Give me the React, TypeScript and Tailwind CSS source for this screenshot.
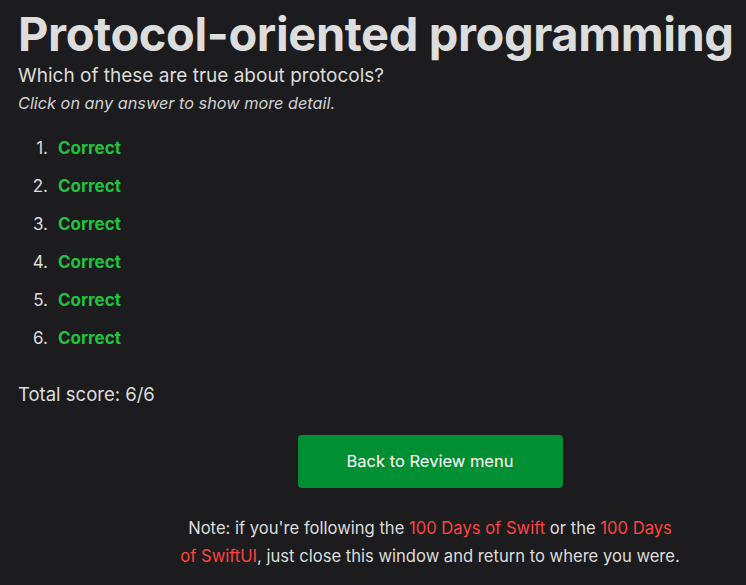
import { FC } from "react";

const answers = [1, 2, 3, 4, 5, 6];

const AnswerRow: FC<{ n: number }> = ({ n }) => {
  return (
    <li className="flex h-[38px] items-center">
      <span className="w-[40px] pr-[10px] text-right font-normal text-[#dcdcdc]">{n}.</span>
      <span className="font-bold text-[#1ec43c]">Correct</span>
    </li>
  );
};

export default function App() {
  return (
    <div
      className="h-[585px] w-[746px] overflow-hidden bg-[#1c1c1e] text-[#dcdcdc]"
      style={{ fontFamily: "Inter, 'Noto Sans', sans-serif" }}
    >
      <div className="w-[842px] pl-[18px] pt-[7px]">
        <h1 className="text-[47px] font-bold leading-[54px] tracking-[-0.4px] text-[#dddddd]">
          Protocol-oriented programming
        </h1>
        <p className="mt-[2px] text-[19px] leading-[26px]">Which of these are true about protocols?</p>
        <p className="mt-[1px] text-[16.3px] italic leading-[26px] text-[#d0d0d0]">
          Click on any answer to show more detail.
        </p>

        <ol className="mt-[14px] text-[17px]">
          {answers.map((n) => (
            <AnswerRow key={n} n={n} />
          ))}
        </ol>

        <p className="mt-[23px] text-[18.5px] leading-[26px]">Total score: 6/6</p>

        <div className="mt-[28px] flex flex-col items-center">
          <button className="h-[53px] w-[265px] rounded-[4px] bg-[#008f33] text-[16.5px] text-white">
            Back to Review menu
          </button>
          <p className="mt-[26px] w-[502px] text-center text-[16.6px] leading-[28px] text-[#dcdcdc]">
            Note: if you're following the <span className="text-[#ff4340]">100 Days of Swift</span> or the{" "}
            <span className="text-[#ff4340]">100 Days of SwiftUI</span>, just close this window and return to where
            you were.
          </p>
        </div>
      </div>
    </div>
  );
}
